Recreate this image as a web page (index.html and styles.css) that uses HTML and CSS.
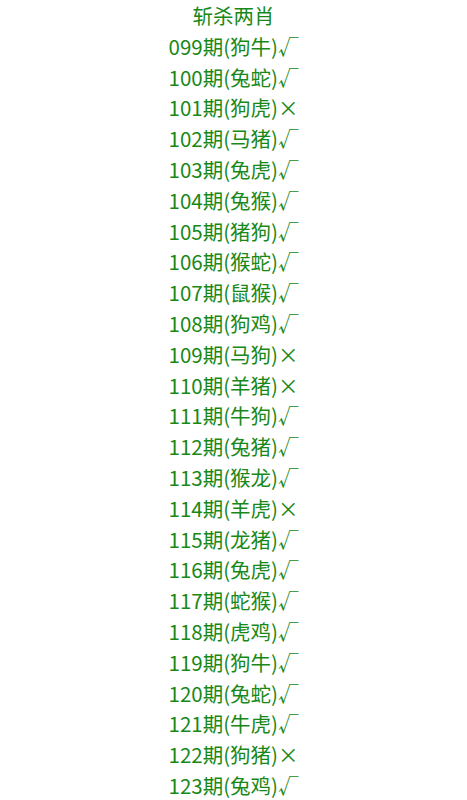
FILE: index.html
```html
<!DOCTYPE html>
<html lang="zh">
<head>
<meta charset="utf-8">
<link rel="stylesheet" href="styles.css">
</head>
<body>
<div class="list">
<div class="row">斩杀两肖</div>
<div class="row">099期(狗牛)√</div>
<div class="row">100期(兔蛇)√</div>
<div class="row">101期(狗虎)×</div>
<div class="row">102期(马猪)√</div>
<div class="row">103期(兔虎)√</div>
<div class="row">104期(兔猴)√</div>
<div class="row">105期(猪狗)√</div>
<div class="row">106期(猴蛇)√</div>
<div class="row">107期(鼠猴)√</div>
<div class="row">108期(狗鸡)√</div>
<div class="row">109期(马狗)×</div>
<div class="row">110期(羊猪)×</div>
<div class="row">111期(牛狗)√</div>
<div class="row">112期(兔猪)√</div>
<div class="row">113期(猴龙)√</div>
<div class="row">114期(羊虎)×</div>
<div class="row">115期(龙猪)√</div>
<div class="row">116期(兔虎)√</div>
<div class="row">117期(蛇猴)√</div>
<div class="row">118期(虎鸡)√</div>
<div class="row">119期(狗牛)√</div>
<div class="row">120期(兔蛇)√</div>
<div class="row">121期(牛虎)√</div>
<div class="row">122期(狗猪)×</div>
<div class="row">123期(兔鸡)√</div>
</div>
</body>
</html>
```
FILE: styles.css
```css
html, body {
  margin: 0;
  padding: 0;
  background: #ffffff;
}
.list {
  display: flex;
  flex-direction: column;
  align-items: center;
  font-family: "Noto Sans CJK SC", "Noto Sans", sans-serif;
  font-size: 20.5px;
  line-height: 30.8px;
  color: #188818;
}
.row {
  text-align: center;
  white-space: nowrap;
}
```
